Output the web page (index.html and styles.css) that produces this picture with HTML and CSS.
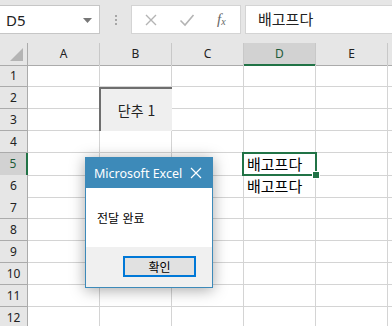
FILE: index.html
```html
<!DOCTYPE html>
<html lang="ko">
<head>
    <meta charset="UTF-8">
    <title>Excel - 전달 완료</title>
    <link rel="stylesheet" href="styles.css">
</head>
<body>
    <div id="app">
        <!-- formula bar -->
        <div class="formula-bar">
            <div class="name-box">
                <span>D5</span>
                <svg class="drop" width="9" height="5" viewBox="0 0 9 5"><path d="M0 0H9L4.5 5Z" fill="#777"/></svg>
            </div>
            <div class="grip">
                <i></i><i></i><i></i>
            </div>
            <div class="fx-buttons">
                <svg width="14" height="14" viewBox="0 0 14 14"><path d="M2 2L12 12M12 2L2 12" stroke="#b4b4b4" stroke-width="1.4"/></svg>
                <svg width="16" height="14" viewBox="0 0 16 14"><path d="M1.5 7.5L6 12L14.5 2" stroke="#b4b4b4" stroke-width="1.6" fill="none"/></svg>
                <span class="fx">f<sub>x</sub></span>
            </div>
            <div class="formula-input">배고프다</div>
        </div>

        <!-- sheet -->
        <div class="sheet">
            <div class="row head">
                <div class="corner"><span></span></div>
                <div class="ch">A</div>
                <div class="ch">B</div>
                <div class="ch">C</div>
                <div class="ch sel">D</div>
                <div class="ch">E</div>
                <div class="ch"></div>
            </div>
            <div class="row"><div class="rh">1</div><div class="c"></div><div class="c"></div><div class="c"></div><div class="c"></div><div class="c"></div><div class="c"></div></div>
            <div class="row"><div class="rh">2</div><div class="c"></div><div class="c"></div><div class="c"></div><div class="c"></div><div class="c"></div><div class="c"></div></div>
            <div class="row"><div class="rh">3</div><div class="c"></div><div class="c"></div><div class="c"></div><div class="c"></div><div class="c"></div><div class="c"></div></div>
            <div class="row"><div class="rh">4</div><div class="c"></div><div class="c"></div><div class="c"></div><div class="c"></div><div class="c"></div><div class="c"></div></div>
            <div class="row"><div class="rh sel">5</div><div class="c"></div><div class="c"></div><div class="c"></div><div class="c">배고프다</div><div class="c"></div><div class="c"></div></div>
            <div class="row"><div class="rh">6</div><div class="c"></div><div class="c"></div><div class="c"></div><div class="c">배고프다</div><div class="c"></div><div class="c"></div></div>
            <div class="row"><div class="rh">7</div><div class="c"></div><div class="c"></div><div class="c"></div><div class="c"></div><div class="c"></div><div class="c"></div></div>
            <div class="row"><div class="rh">8</div><div class="c"></div><div class="c"></div><div class="c"></div><div class="c"></div><div class="c"></div><div class="c"></div></div>
            <div class="row"><div class="rh">9</div><div class="c"></div><div class="c"></div><div class="c"></div><div class="c"></div><div class="c"></div><div class="c"></div></div>
            <div class="row"><div class="rh">10</div><div class="c"></div><div class="c"></div><div class="c"></div><div class="c"></div><div class="c"></div><div class="c"></div></div>
            <div class="row"><div class="rh">11</div><div class="c"></div><div class="c"></div><div class="c"></div><div class="c"></div><div class="c"></div><div class="c"></div></div>
            <div class="row"><div class="rh">12</div><div class="c"></div><div class="c"></div><div class="c"></div><div class="c"></div><div class="c"></div><div class="c"></div></div>
        </div>

        <!-- floating things on top of the sheet -->
        <div class="shape-button">단추 1</div>
        <div class="selection"><span class="handle"></span></div>

        <div class="msgbox">
            <div class="msgbox-title">
                <span>Microsoft Excel</span>
                <svg width="12" height="12" viewBox="0 0 12 12"><path d="M1 1L11 11M11 1L1 11" stroke="#fff" stroke-width="1.2"/></svg>
            </div>
            <div class="msgbox-body">전달 완료</div>
            <div class="msgbox-footer">
                <button type="button">확인</button>
            </div>
        </div>
    </div>
</body>
</html>
```

FILE: styles.css
```css
html, body {
    margin: 0;
    padding: 0;
    overflow: hidden;
}

body {
    font-family: "Noto Sans", "Noto Sans CJK KR", sans-serif;
    background: #fff;
    color: #000;
}

#app {
    position: relative;
    width: 392px;
    height: 326px;
    overflow: hidden;
}

/* formula bar */
.formula-bar {
    height: 43px;
    background: #e6e6e6;
    display: flex;
    align-items: flex-start;
    padding-top: 5px;
    box-sizing: border-box;
}

.name-box {
    width: 101px;
    height: 29px;
    margin-left: -1px;
    background: #fff;
    border: 1px solid #c6c6c6;
    box-sizing: border-box;
    display: flex;
    align-items: center;
    justify-content: space-between;
    padding: 0 7px 0 6px;
    font-size: 15px;
    color: #222;
}

.name-box .drop {
    margin-top: 1px;
}

.grip {
    width: 31px;
    height: 29px;
    display: flex;
    flex-direction: column;
    align-items: center;
    justify-content: center;
    gap: 2px;
}

.grip i {
    width: 2px;
    height: 2px;
    background: #a6a6a6;
}

.fx-buttons {
    width: 110px;
    height: 29px;
    background: #fff;
    border: 1px solid #d4d4d4;
    box-sizing: border-box;
    display: flex;
    align-items: center;
    padding-left: 12px;
    gap: 21px;
}

.fx {
    font-family: "Liberation Serif", serif;
    font-style: italic;
    font-size: 15px;
    color: #666;
    margin-left: 1px;
}

.fx sub {
    font-size: 10px;
    vertical-align: -1px;
}

.formula-input {
    flex: 1;
    height: 29px;
    margin-left: 4px;
    background: #fff;
    border: 1px solid #d4d4d4;
    border-right: none;
    box-sizing: border-box;
    padding-left: 12px;
    font-family: "Noto Sans CJK KR", sans-serif;
    font-size: 15px;
    line-height: 26px;
    color: #222;
}

/* sheet grid */
.row {
    display: grid;
    grid-template-columns: 28px repeat(6, 72px);
    height: 22px;
}

.row > div {
    box-sizing: border-box;
    border-right: 1px solid #d4d4d4;
    border-bottom: 1px solid #d4d4d4;
}

.head > div {
    background: #e6e6e6;
    border-bottom: 1px solid #ababab;
    border-right: 1px solid #c8c8c8;
    font-size: 12px;
    line-height: 21px;
    text-align: center;
    color: #222;
}

.head .corner {
    position: relative;
    border-right: 1px solid #ababab;
}

.corner span {
    position: absolute;
    right: 4px;
    bottom: 4px;
    width: 0;
    height: 0;
    border-left: 13px solid transparent;
    border-bottom: 13px solid #b4b4b4;
}

.head .sel {
    background: #d2d2d2;
    border-bottom: 2px solid #217346;
    color: #1e5c3a;
}

.rh {
    background: #e6e6e6;
    font-size: 12px;
    line-height: 21px;
    text-align: center;
    color: #222;
}

.row > .rh {
    border-right: 1px solid #ababab;
    border-bottom: 1px solid #ababab;
}

.row > .rh.sel {
    background: #d2d2d2;
    border-right: 2px solid #217346;
    color: #1e5c3a;
}

.c {
    font-family: "Noto Sans CJK KR", sans-serif;
    font-size: 15px;
    line-height: 22px;
    padding-left: 3px;
    white-space: nowrap;
}

/* form control button drawn on the sheet */
.shape-button {
    position: absolute;
    left: 99px;
    top: 87px;
    width: 73px;
    height: 44px;
    box-sizing: border-box;
    background: #efefef;
    border-left: 2px solid #6e6e6e;
    border-top: 2px solid #6e6e6e;
    font-family: "Noto Sans CJK KR", sans-serif;
    font-size: 14px;
    line-height: 42px;
    text-align: center;
    color: #222;
}

.selection {
    position: absolute;
    left: 242px;
    top: 152px;
    width: 75px;
    height: 24px;
    box-sizing: border-box;
    border: 2px solid #217346;
}

.handle {
    position: absolute;
    right: -5px;
    bottom: -5px;
    width: 6px;
    height: 6px;
    background: #217346;
    border: 1px solid #fff;
}

/* message box */
.msgbox {
    position: absolute;
    left: 85px;
    top: 157px;
    width: 128px;
    height: 131px;
    box-sizing: border-box;
    border: 1px solid #3d8ab9;
    background: #fff;
    box-shadow: 0 2px 14px rgba(0, 0, 0, 0.35);
    display: flex;
    flex-direction: column;
}

.msgbox-title {
    height: 30px;
    background: #3d8ab9;
    color: #fff;
    display: flex;
    align-items: center;
    justify-content: space-between;
    padding: 0 10px 0 8px;
    font-size: 12.5px;
}

.msgbox-body {
    height: 59px;
    padding-left: 11px;
    font-family: "Noto Sans CJK KR", sans-serif;
    font-size: 12px;
    line-height: 60px;
}

.msgbox-footer {
    flex: 1;
    background: #f0f0f0;
    display: flex;
    justify-content: flex-end;
    align-items: flex-start;
    padding: 9px 16px 0 0;
}

.msgbox-footer button {
    width: 73px;
    height: 21px;
    padding: 0;
    background: #e1e1e1;
    border: 2px solid #0078d7;
    font-family: "Noto Sans CJK KR", sans-serif;
    font-size: 12px;
    color: #000;
}
```
